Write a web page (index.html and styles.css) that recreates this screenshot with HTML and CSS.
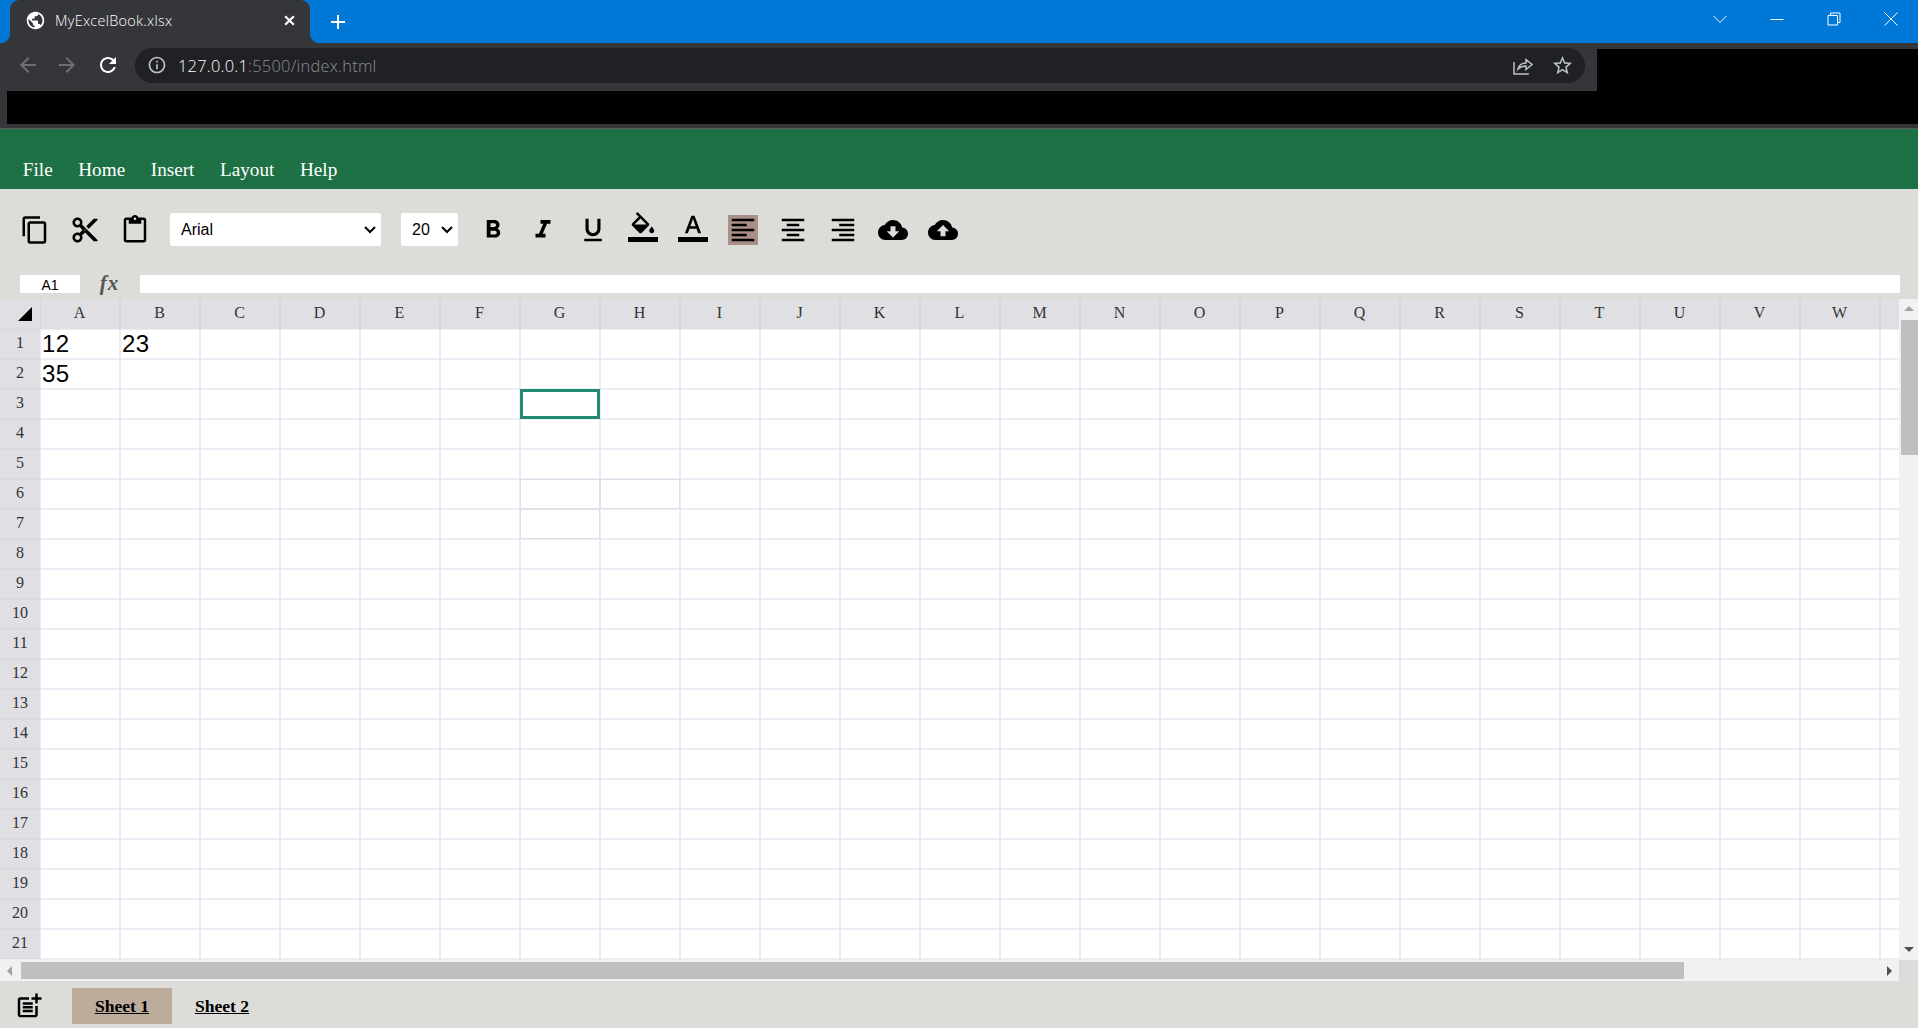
FILE: index.html
```html
<!DOCTYPE html>
<html lang="en">

<head>
    <meta charset="UTF-8">
    <meta name="viewport" content="width=device-width, initial-scale=1.0">
    <title>MyExcelBook.xlsx</title>
    <link rel="stylesheet" href="styles.css">
</head>

<body>
    <!-- browser window frame -->
    <header class="browser">
        <div class="tab-strip">
            <div class="tab">
                <svg class="tab-globe" viewBox="0 0 24 24"><path d="M12 2C6.48 2 2 6.48 2 12s4.48 10 10 10 10-4.48 10-10S17.52 2 12 2zm-1 17.93c-3.95-.49-7-3.85-7-7.93 0-.62.08-1.21.21-1.79L9 15v1c0 1.1.9 2 2 2v1.93zm6.9-2.54c-.26-.81-1-1.39-1.9-1.39h-1v-3c0-.55-.45-1-1-1H8v-2h2c.55 0 1-.45 1-1V7h2c1.1 0 2-.9 2-2v-.41c2.93 1.19 5 4.06 5 7.41 0 2.08-.8 3.97-2.1 5.39z"/></svg>
                <span class="tab-title">MyExcelBook.xlsx</span>
                <svg class="tab-close" viewBox="0 0 12 12"><path d="M2 2l8 8M10 2l-8 8"/></svg>
            </div>
            <svg class="new-tab" viewBox="0 0 16 16"><path d="M8 1v14M1 8h14"/></svg>
            <div class="window-buttons">
                <div class="window-button"><svg viewBox="0 0 14 14"><path d="M0.5 4l6.5 6.5L13.5 4"/></svg></div>
                <div class="window-button"><svg viewBox="0 0 14 14"><path d="M0.5 7.5h13"/></svg></div>
                <div class="window-button"><svg viewBox="0 0 14 14"><path d="M1 3.5h9.5v9.5H1zM3.5 3.5V1h9.5v9.5h-2.5"/></svg></div>
                <div class="window-button"><svg viewBox="0 0 14 14"><path d="M0.5 0.5l13 13M13.5 0.5l-13 13"/></svg></div>
            </div>
        </div>
        <div class="browser-bar">
            <nav class="nav-row">
                <svg class="nav-icon nav-off" viewBox="0 0 24 24"><path d="M20 11H7.83l5.59-5.59L12 4l-8 8 8 8 1.41-1.41L7.83 13H20v-2z"/></svg>
                <svg class="nav-icon nav-off nav-forward" viewBox="0 0 24 24"><path d="M12 4l-1.41 1.41L16.17 11H4v2h12.17l-5.58 5.59L12 20l8-8z"/></svg>
                <svg class="nav-icon" viewBox="0 0 24 24"><path d="M17.65 6.35C16.2 4.9 14.21 4 12 4c-4.42 0-7.99 3.58-7.99 8s3.57 8 7.99 8c3.73 0 6.84-2.55 7.73-6h-2.08c-.82 2.33-3.04 4-5.65 4-3.31 0-6-2.69-6-6s2.69-6 6-6c1.66 0 3.14.69 4.22 1.78L13 11h7V4l-2.35 2.35z"/></svg>
                <div class="omnibox">
                    <svg class="omni-info" viewBox="0 0 24 24"><path d="M11 7h2v2h-2zm0 4h2v6h-2zm1-9C6.48 2 2 6.48 2 12s4.48 10 10 10 10-4.48 10-10S17.52 2 12 2zm0 18c-4.41 0-8-3.59-8-8s3.59-8 8-8 8 3.59 8 8-3.59 8-8 8z"/></svg>
                    <span class="omni-url">127.0.0.1<span class="omni-path">:5500/index.html</span></span>
                    <svg class="omni-share" viewBox="0 0 20 20"><path d="M1 7v12h14v-1M5 14c1-4 4-6 8-6V4.500l6 5-6 5V11c-3 0-6 1-8 3z"/></svg>
                    <svg class="omni-star" viewBox="0 0 24 24"><path d="M22 9.24l-7.19-.62L12 2 9.19 8.63 2 9.24l5.46 4.73L5.82 21 12 17.27 18.18 21l-1.63-7.03L22 9.24zM12 15.4l-3.76 2.27 1-4.28-3.32-2.88 4.38-.38L12 6.1l1.71 4.04 4.38.38-3.32 2.88 1 4.28L12 15.4z"/></svg>
                </div>
            </nav>
            <div class="black-right"></div>
            <div class="black-bottom"></div>
        </div>
    </header>

    <nav class="menu">
        <a href="#">File</a>
        <a href="#">Home</a>
        <a href="#">Insert</a>
        <a href="#">Layout</a>
        <a href="#">Help</a>
    </nav>

    <div class="tools">
        <svg class="tool" viewBox="0 0 24 24"><path d="M16 1H4c-1.100 0-2 .9-2 2v14h2V3h12V1zm3 4H8c-1.100 0-2 .9-2 2v14c0 1.100.9 2 2 2h11c1.100 0 2-.9 2-2V7c0-1.100-.9-2-2-2zm0 16H8V7h11v14z"/></svg>
        <svg class="tool" viewBox="0 0 24 24"><path d="M9.64 7.64c.23-.5.36-1.050.36-1.640 0-2.210-1.790-4-4-4S2 3.790 2 6s1.790 4 4 4c.59 0 1.140-.13 1.640-.36L10 12l-2.360 2.360C7.140 14.130 6.590 14 6 14c-2.210 0-4 1.790-4 4s1.790 4 4 4 4-1.790 4-4c0-.59-.13-1.140-.36-1.640L12 14l7 7h3v-1L9.640 7.640zM6 8c-1.100 0-2-.89-2-2s.9-2 2-2 2 .89 2 2-.9 2-2 2zm0 12c-1.100 0-2-.89-2-2s.9-2 2-2 2 .89 2 2-.9 2-2 2zm6-7.500c-.28 0-.5-.22-.5-.5s.22-.5.5-.5.5.22.5.5-.22.5-.5.5zM19 3l-6 6 2 2 7-7V3z"/></svg>
        <svg class="tool" viewBox="0 0 24 24"><path d="M19 2h-4.180C14.400.84 13.300 0 12 0c-1.300 0-2.400.84-2.820 2H5c-1.100 0-2 .9-2 2v16c0 1.100.9 2 2 2h14c1.100 0 2-.9 2-2V4c0-1.100-.9-2-2-2zm-7 0c.55 0 1 .45 1 1s-.45 1-1 1-1-.45-1-1 .45-1 1-1zm7 18H5V4h2v3h10V4h2v16z"/></svg>
        <select class="font-select"><option>Arial</option><option>Times New Roman</option></select>
        <select class="size-select"><option>20</option><option>14</option></select>
        <svg class="tool" viewBox="0 0 24 24"><path d="M15.600 10.790c.97-.67 1.650-1.770 1.650-2.790 0-2.260-1.750-4-4-4H7v14h7.040c2.090 0 3.710-1.700 3.710-3.790 0-1.520-.86-2.820-2.150-3.420zM10 6.500h3c.83 0 1.500.67 1.500 1.500s-.67 1.500-1.500 1.500h-3v-3zm3.500 9H10v-3h3.500c.83 0 1.500.67 1.500 1.500s-.67 1.500-1.500 1.500z"/></svg>
        <svg class="tool" viewBox="0 0 24 24"><path d="M10 4v3h2.210l-3.420 8H6v3h8v-3h-2.210l3.420-8H18V4z"/></svg>
        <svg class="tool" viewBox="0 0 24 24"><path d="M12 17c3.310 0 6-2.690 6-6V3h-2.500v8c0 1.930-1.570 3.500-3.500 3.500S8.500 12.930 8.500 11V3H6v8c0 3.310 2.690 6 6 6zm-7 2v2h14v-2H5z"/></svg>
        <svg class="tool tool-colour" viewBox="0 0 24 24"><path d="M16.560 8.940L7.620 0 6.210 1.410l2.380 2.380-5.150 5.150c-.59.59-.59 1.540 0 2.120l5.500 5.500c.29.29.68.44 1.060.44s.77-.15 1.060-.44l5.500-5.500c.59-.58.59-1.530 0-2.120zM5.210 10L10 5.210 14.790 10H5.210zM19 11.500s-2 2.170-2 3.500c0 1.100.9 2 2 2s2-.9 2-2c0-1.330-2-3.500-2-3.500zM0 20h24v4H0z"/></svg>
        <svg class="tool tool-colour" viewBox="0 0 24 24"><path d="M0 20h24v4H0zm5.490-3h2.420l1.270-3.580h5.650L16.090 17h2.420L13.250 3h-2.500L5.490 17zm4.420-5.610l2.030-5.790h.12l2.030 5.790H9.910z"/></svg>
        <svg class="tool tool-active" viewBox="0 0 24 24"><path d="M15 15H3v2h12v-2zm0-8H3v2h12V7zM3 13h18v-2H3v2zm0 8h18v-2H3v2zM3 3v2h18V3H3z"/></svg>
        <svg class="tool" viewBox="0 0 24 24"><path d="M7 15v2h10v-2H7zm-4 6h18v-2H3v2zm0-8h18v-2H3v2zm4-6v2h10V7H7zM3 3v2h18V3H3z"/></svg>
        <svg class="tool" viewBox="0 0 24 24"><path d="M3 21h18v-2H3v2zm6-4h12v-2H9v2zm-6-4h18v-2H3v2zm6-4h12V7H9v2zM3 3v2h18V3H3z"/></svg>
        <svg class="tool" viewBox="0 0 24 24"><path d="M19.350 10.040C18.670 6.590 15.640 4 12 4 9.110 4 6.600 5.640 5.350 8.040 2.340 8.360 0 10.910 0 14c0 3.310 2.690 6 6 6h13c2.760 0 5-2.240 5-5 0-2.640-2.050-4.780-4.650-4.960zM17 13l-5 5-5-5h3V9h4v4h3z"/></svg>
        <svg class="tool" viewBox="0 0 24 24"><path d="M19.350 10.040C18.670 6.590 15.640 4 12 4 9.110 4 6.600 5.640 5.350 8.040 2.340 8.360 0 10.910 0 14c0 3.310 2.690 6 6 6h13c2.760 0 5-2.240 5-5 0-2.640-2.050-4.780-4.650-4.960zM14 13v4h-4v-4H7l5-5 5 5h-3z"/></svg>
    </div>

    <div class="formula-bar">
        <div class="cell-name">A1</div>
        <div class="fx">fx</div>
        <div class="formula-input"></div>
    </div>

    <main class="sheet">
        <div class="grid" id="grid"></div>
        <div class="v-scroll">
            <span class="arrow arrow-up"></span>
            <div class="v-thumb"></div>
            <span class="arrow arrow-down"></span>
        </div>
        <div class="h-scroll">
            <span class="arrow arrow-left"></span>
            <div class="h-thumb"></div>
            <span class="arrow arrow-right"></span>
        </div>
        <div class="scroll-corner"></div>
    </main>

    <footer class="sheet-tabs">
        <svg class="add-sheet" viewBox="0 0 24 24"><path d="M17 19.220H5V7h7V5H5c-1.100 0-2 .9-2 2v12c0 1.100.9 2 2 2h12c1.100 0 2-.9 2-2v-7h-2v7.220zM19 2h-2v3h-3c.01.01 0 2 0 2h3v2.990c.01.01 2 0 2 0V7h3V5h-3V2zM7 9h8v2H7zm0 3v2h8v-2h-3zm0 3h8v2H7z"/></svg>
        <a class="sheet-tab sheet-tab-active" href="#">Sheet 1</a>
        <a class="sheet-tab" href="#">Sheet 2</a>
    </footer>

    <script src="script.js"></script>
</body>

</html>
```

FILE: styles.css
```css
* {
    box-sizing: border-box;
}

body {
    margin: 0;
    height: 1028px;
    overflow: hidden;
    background-color: #dcddd8;
    font-family: 'Liberation Serif', serif;
}

/* browser frame */
.tab-strip {
    display: flex;
    align-items: flex-start;
    height: 43px;
    padding-left: 10px;
    background-color: #0078d7;
}

.tab {
    position: relative;
    display: flex;
    align-items: center;
    width: 300px;
    height: 43px;
    padding: 0 14px 2px 15px;
    background-color: #35363a;
    border-radius: 9px 9px 0 0;
    color: white;
}

.tab::before,
.tab::after {
    content: '';
    position: absolute;
    bottom: 0;
    width: 10px;
    height: 10px;
}

.tab::before {
    left: -10px;
    background: radial-gradient(circle at 0 0, transparent 10px, #35363a 10.5px);
}

.tab::after {
    right: -10px;
    background: radial-gradient(circle at 100% 0, transparent 10px, #35363a 10.5px);
}

.tab-globe {
    width: 21px;
    height: 21px;
    fill: white;
}

.tab-title {
    flex: 1;
    margin-left: 9px;
    font-family: 'Open Sans', sans-serif;
    font-size: 14.4px;
    font-weight: 300;
    letter-spacing: 0.3px;
}

.tab-close {
    width: 13px;
    height: 13px;
    fill: none;
    stroke: white;
    stroke-width: 2;
}

.new-tab {
    width: 16px;
    height: 16px;
    margin: 14px 0 0 20px;
    fill: none;
    stroke: white;
    stroke-width: 2;
}

.window-buttons {
    display: flex;
    margin-left: auto;
    margin-right: -1px;
}

.window-button {
    display: flex;
    justify-content: center;
    align-items: center;
    width: 57px;
    height: 37px;
}

.window-button svg {
    width: 14px;
    height: 14px;
    fill: none;
    stroke: white;
    stroke-width: 1;
}

.browser-bar {
    display: grid;
    grid-template-columns: 7px 1590px 1fr;
    grid-template-rows: 6px 42px 33px;
    height: 86px;
    border-bottom: 1px solid #5b5b5d;
    background-color: #35363a;
}

.nav-row {
    grid-column: 1 / 3;
    grid-row: 1 / 3;
    display: flex;
    align-items: flex-start;
    padding: 5px 12px 0 16px;
}

.nav-icon {
    flex: none;
    width: 24px;
    height: 24px;
    margin: 5px 15px 0 0;
    fill: white;
}

.nav-off {
    fill: #6f7073;
}

.nav-forward {
    margin-right: 17px;
}

.omnibox {
    flex: 1;
    display: flex;
    align-items: center;
    height: 35px;
    padding: 0 11px 1px 12px;
    background-color: #202124;
    border-radius: 18px;
}

.omni-info {
    width: 20px;
    height: 20px;
    fill: #bdc1c6;
}

.omni-url {
    flex: 1;
    margin-left: 11px;
    font-family: 'Open Sans', sans-serif;
    font-size: 16.4px;
    font-weight: 300;
    letter-spacing: 0.25px;
    color: white;
}

.omni-path {
    color: #8c8e91;
}

.omni-share {
    width: 20px;
    height: 20px;
    fill: none;
    stroke: #bdc1c6;
    stroke-width: 1.500;
}

.omni-star {
    width: 23px;
    height: 23px;
    margin-left: 18px;
    fill: #bdc1c6;
}

.black-right {
    grid-column: 3;
    grid-row: 2;
    background-color: black;
}

.black-bottom {
    grid-column: 2 / 4;
    grid-row: 3;
    background-color: black;
}

/* menu */
.menu {
    display: flex;
    align-items: flex-end;
    height: 60px;
    padding: 0 0 8px 10px;
    background-color: #1e7145;
}

.menu a {
    padding: 0 12.8px;
    color: white;
    font-size: 19.2px;
    text-decoration: none;
}

/* toolbar */
.tools {
    display: flex;
    align-items: center;
    gap: 20px;
    height: 86px;
    padding: 24px 0 29px 20px;
}

.tool {
    flex: none;
    width: 30px;
    height: 30px;
    fill: black;
}

.tool-colour {
    margin-bottom: 6px;
}

.tool-active {
    background-color: #a98f88;
}

.font-select,
.size-select {
    height: 33px;
    padding-left: 11px;
    border: none;
    border-radius: 2px;
    appearance: none;
    background: white url("data:image/svg+xml,%3Csvg xmlns='http://www.w3.org/2000/svg' width='12' height='8'%3E%3Cpath d='M1 1l5 5 5-5' fill='none' stroke='black' stroke-width='2'/%3E%3C/svg%3E") no-repeat right 5px center;
    font-family: 'Liberation Sans', sans-serif;
    font-size: 16px;
}

.font-select {
    width: 211px;
}

.size-select {
    width: 57px;
}

/* formula bar */
.formula-bar {
    display: flex;
    height: 24px;
    padding: 0 18px 6px 20px;
}

.cell-name {
    width: 60px;
    background-color: white;
    font-family: 'Liberation Sans', sans-serif;
    font-size: 14px;
    line-height: 20px;
    text-align: center;
}

.fx {
    width: 60px;
    padding-right: 1px;
    color: #555;
    font-size: 21px;
    font-style: italic;
    font-weight: bold;
    letter-spacing: 1px;
    line-height: 17px;
    text-align: center;
}

.formula-input {
    flex: 1;
    background-color: white;
}

/* sheet */
.sheet {
    display: grid;
    grid-template-columns: 1fr 19px;
    grid-template-rows: 661px 21px;
}

.grid {
    display: grid;
    grid-template-columns: 40px repeat(24, 80px);
    grid-template-rows: 30px repeat(21, 30px);
    overflow: hidden;
    background-color: #eef0f3;
}

.head {
    display: flex;
    justify-content: center;
    align-items: center;
    padding: 0 1px 2px 0;
    border-right: 1px solid #d6d6dc;
    border-left: 1px solid #d6d6dc;
    background-color: #dfdfe4;
    color: #333;
    font-size: 16px;
}

.row-head {
    padding: 0 0 3px;
    border: none;
    border-top: 1px solid #d9d9df;
    border-bottom: 1px solid #d9d9df;
}

.corner {
    padding: 0;
    border: none;
    background-color: #dfdfe4;
}

.corner::before {
    content: '';
    width: 0;
    height: 0;
    margin: 0 0 1px 9px;
    border-style: solid;
    border-width: 0 0 14px 14px;
    border-color: transparent transparent black transparent;
}

.cell {
    padding-left: 1px;
    border: 1px solid #e9edf3;
    background-color: white;
    color: black;
    font-family: 'Liberation Sans', sans-serif;
    font-size: 24px;
    letter-spacing: 0.3px;
    line-height: 27px;
}

.cell-touched {
    border-color: #dfe1e8;
}

.cell-selected {
    border: 3px solid #218c74;
}

/* scrollbars drawn by hand */
.v-scroll,
.h-scroll {
    display: flex;
    background-color: #f1f1f1;
}

.v-scroll {
    flex-direction: column;
    align-items: center;
    justify-content: space-between;
    padding: 7px 0 8px;
}

.v-thumb {
    align-self: flex-end;
    width: 17px;
    height: 135px;
    margin: 9px 0 auto;
    background-color: #bfbfbf;
}

.h-scroll {
    align-items: center;
    padding: 0 7px;
}

.h-thumb {
    width: 1663px;
    height: 17px;
    margin: 0 auto 0 9px;
    background-color: #bfbfbf;
}

.scroll-corner {
    background-color: #dcdcdc;
}

.arrow {
    flex: none;
    width: 0;
    height: 0;
    border-style: solid;
    border-color: transparent;
}

.arrow-up {
    border-width: 0 5px 5px;
    border-bottom-color: #a3a3a3;
}

.arrow-down {
    border-width: 5px 5px 0;
    border-top-color: #505050;
}

.arrow-left {
    border-width: 5px 5px 5px 0;
    border-right-color: #a3a3a3;
}

.arrow-right {
    border-width: 5px 0 5px 5px;
    border-left-color: #505050;
}

/* sheet tabs */
.sheet-tabs {
    display: flex;
    align-items: flex-start;
    height: 47px;
    padding: 7px 0 0 14px;
}

.add-sheet {
    width: 30px;
    height: 30px;
    margin: 3px 28px 0 0;
    fill: black;
}

.sheet-tab {
    width: 100px;
    height: 36px;
    color: black;
    font-size: 17.6px;
    font-weight: bold;
    line-height: 36px;
    text-align: center;
}

.sheet-tab-active {
    background-color: #bdab9c;
}
```

FILE: script.js
```js
const grid = document.getElementById('grid');
const values = { A1: '12', B1: '23', A2: '35' };
const touched = ['G6', 'H6', 'G7'];
const columns = 24;
const rows = 21;

// the 24th column runs off the window, so its label never shows
function columnName(i) {
    return i < 23 ? String.fromCharCode(65 + i) : '';
}

function addDiv(className, text) {
    const div = document.createElement('div');
    div.className = className;
    if (text) div.textContent = text;
    grid.appendChild(div);
    return div;
}

addDiv('head corner');
for (let c = 0; c < columns; c++) {
    addDiv('head', columnName(c));
}

for (let r = 1; r <= rows; r++) {
    addDiv('head row-head', String(r));
    for (let c = 0; c < columns; c++) {
        const id = columnName(c) + r;
        const cell = addDiv('cell', values[id]);
        if (touched.includes(id)) cell.classList.add('cell-touched');
        if (id === 'G3') cell.classList.add('cell-selected');
    }
}
```
